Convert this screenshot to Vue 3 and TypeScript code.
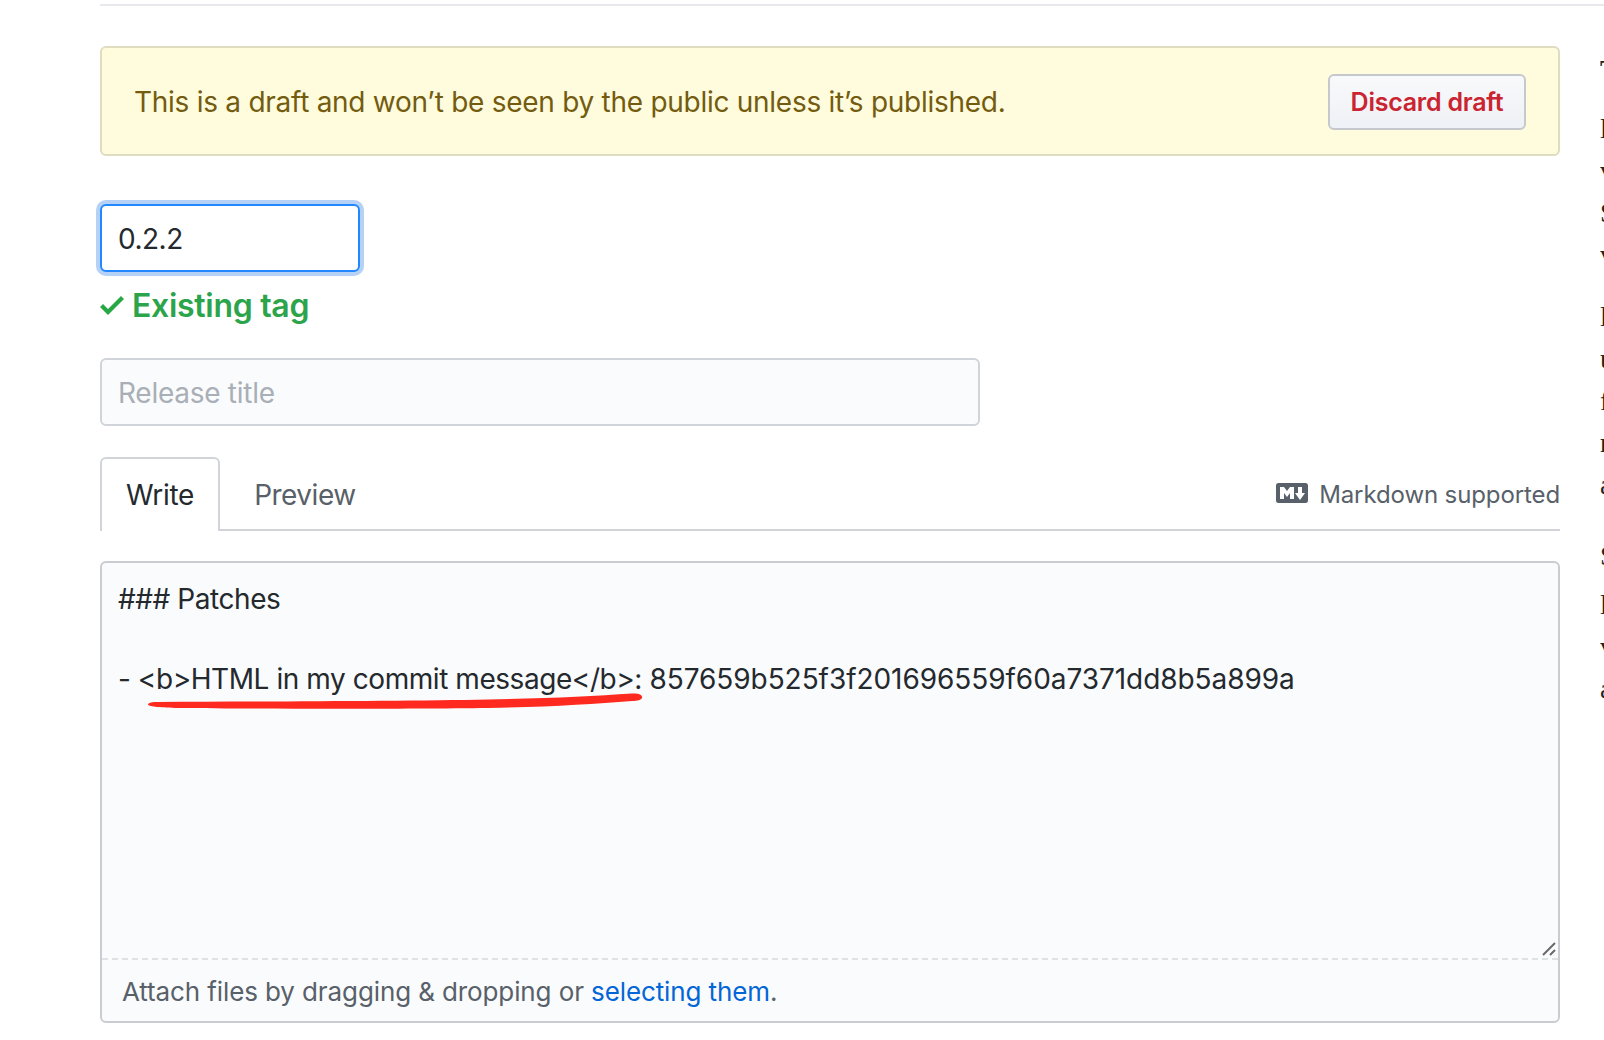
<script setup lang="ts">
const edge = [
  { ch: 'T', base: 79, bold: true }, { ch: 'l', base: 138 }, { ch: 'v', base: 180 }, { ch: 'S', base: 222 },
  { ch: 'v', base: 264 }, { ch: 'l', base: 326 }, { ch: 'u', base: 368 }, { ch: 'f', base: 410 },
  { ch: 'r', base: 452 }, { ch: 'a', base: 494 }, { ch: 'S', base: 565 }, { ch: 'l', base: 614 },
  { ch: 'v', base: 656 }, { ch: 'a', base: 698 }
]
</script>

<template>
  <div class="page">
    <main class="main">
      <div class="banner">
        <p class="banner-text">This is a draft and won’t be seen by the public unless it’s published.</p>
        <button class="discard">Discard draft</button>
      </div>

      <div class="tag-input">0.2.2</div>
      <div class="tag-status">
        <svg class="check" viewBox="0 0 12 16" width="24" height="32" aria-hidden="true">
          <path fill="#28a745" fill-rule="evenodd" d="M12 5l-8 8-4-4 1.500-1.500L4 10l6.500-6.500L12 5z" />
        </svg>
        <span>Existing tag</span>
      </div>

      <div class="title-input">Release title</div>

      <div class="tabs">
        <div class="tab active">Write</div>
        <div class="tab">Preview</div>
        <div class="md">
          <svg viewBox="0 0 16 10" width="32" height="20" aria-hidden="true">
            <path fill="#586069" fill-rule="evenodd" d="M14.850 0H1.150C.520 0 0 .520 0 1.150v7.700C0 9.480.520 10 1.150 10h13.700c.630 0 1.150-.520 1.150-1.150v-7.700C16 .520 15.480 0 14.850 0zM9 8H7V5L5.500 7 4 5v3H2V2h2l1.500 2L7 2h2v6zm2.990.500L9.500 5H11V2h2v3h1.500l-2.510 3.500z" />
          </svg>
          <span>Markdown supported</span>
        </div>
      </div>

      <div class="editor">
        <div class="editor-body">
          <div class="line">### Patches</div>
          <div class="line">&nbsp;</div>
          <div class="line">- &lt;b&gt;HTML in my commit message&lt;/b&gt;: <span class="hash">857659b525f3f201696559f60a7371dd8b5a899a</span></div>
          <svg class="scribble" viewBox="0 0 500 16" width="500" height="16" aria-hidden="true">
            <path d="M0 11.500 C1 9.500 4 9 10 9 C120 8.500 260 8 340 6.500 C400 5.500 445 3 484 .5 C491 0 495 2 494 5 C493 7 490 8 484 8 C445 11 400 14 340 15 C260 16 120 16 30 15 C14 14.500 1 14 0 11.500 Z" fill="#ff2a1f" />
          </svg>
          <svg class="grip" viewBox="0 0 14 14" width="14" height="14" aria-hidden="true">
            <path d="M1 13 L13 1 M8 13 L13 8" stroke="#6a6a6a" stroke-width="2" fill="none" />
          </svg>
        </div>
        <div class="editor-foot">Attach files by dragging &amp; dropping or <span class="link">selecting them</span>.</div>
      </div>
    </main>
    <div class="edge">
      <span v-for="e in edge" :key="e.base" :class="{ bold: e.bold }" :style="{ top: e.base - 25 + 'px' }">{{ e.ch }}</span>
    </div>
  </div>
</template>

<style>
html, body { margin: 0; background: #fff; overflow: hidden; }
</style>

<style scoped>
.page {
  position: relative;
  width: 1604px;
  height: 1040px;
  overflow: hidden;
  font-family: Inter, "Liberation Sans", sans-serif;
  color: #24292e;
}
.main {
  width: 1460px;
  margin-left: 100px;
  padding-top: 46px;
  position: relative;
}
.main::before {
  content: "";
  position: absolute;
  top: 4px;
  left: 0;
  width: 1504px;
  height: 2px;
  background: #e8e9ec;
}
.banner {
  height: 110px;
  box-sizing: border-box;
  display: flex;
  align-items: center;
  justify-content: space-between;
  padding: 2px 32px 0 32px;
  background: #fffbdd;
  border: 2px solid #dfdcbf;
  border-radius: 6px;
}
.banner-text {
  margin: 0;
  font-size: 28px;
  letter-spacing: -0.27px;
  color: #735c0f;
}
.discard {
  width: 198px;
  height: 56px;
  box-sizing: border-box;
  font: 600 25px Inter, "Liberation Sans", sans-serif;
  letter-spacing: -0.25px;
  color: #cb2431;
  background: linear-gradient(#f8f9fb, #eef1f5);
  border: 2px solid #c5c8cd;
  border-radius: 6px;
  padding: 0;
}
.tag-input {
  width: 260px;
  height: 68px;
  margin-top: 48px;
  box-sizing: border-box;
  display: flex;
  align-items: center;
  padding: 2px 0 0 16px;
  font-size: 28px;
  letter-spacing: -0.5px;
  background: #fff;
  border: 2px solid #2188ff;
  border-radius: 6px;
  box-shadow: 0 0 0 4px #b5d1f5;
}
.tag-status {
  display: flex;
  align-items: center;
  gap: 8px;
  height: 40px;
  margin-top: 13px;
  font-size: 32px;
  font-weight: 600;
  letter-spacing: -0.3px;
  color: #2ca44b;
}
.title-input {
  width: 880px;
  height: 68px;
  margin-top: 33px;
  box-sizing: border-box;
  display: flex;
  align-items: center;
  padding: 2px 0 0 16px;
  font-size: 28px;
  letter-spacing: -0.27px;
  color: #a9afb6;
  background: #fafbfc;
  border: 2px solid #d1d5da;
  border-radius: 6px;
}
.tabs {
  display: flex;
  align-items: stretch;
  height: 74px;
  margin-top: 31px;
  box-sizing: border-box;
  border-bottom: 2px solid #d1d5da;
}
.tab {
  display: flex;
  align-items: center;
  padding: 0 24px;
  font-size: 28px;
  letter-spacing: -0.5px;
  color: #586069;
  margin-right: 8px;
  border: 2px solid transparent;
  border-bottom: 0;
  border-radius: 6px 6px 0 0;
  margin-bottom: -2px;
}
.tab.active {
  color: #24292e;
  background: #fff;
  border-color: #d1d5da;
  letter-spacing: -0.3px;
}
.md {
  margin-left: auto;
  display: flex;
  align-items: center;
  gap: 11px;
  font-size: 24px;
  letter-spacing: -0.11px;
  color: #586069;
}
.md span { padding-top: 2px; }
.editor {
  margin-top: 30px;
  height: 462px;
  box-sizing: border-box;
  background: #fafbfc;
  border: 2px solid #c9ccd1;
  border-radius: 6px;
  display: flex;
  flex-direction: column;
}
.editor-body {
  position: relative;
  flex: 1;
  padding: 16px;
  font-size: 28px;
  letter-spacing: -0.44px;
  line-height: 40px;
  border-bottom: 2px dashed #dfe2e5;
}
.line { white-space: pre; }
.hash { letter-spacing: -0.06px; }
.scribble {
  position: absolute;
  left: 46px;
  top: 130px;
}
.grip {
  position: absolute;
  right: 2px;
  bottom: 2px;
}
.editor-foot {
  height: 61px;
  display: flex;
  align-items: center;
  padding: 1px 0 0 20px;
  box-sizing: border-box;
  font-size: 26px;
  letter-spacing: -0.11px;
  color: #586069;
  white-space: pre;
}
.link { color: #0366d6; }
.edge {
  position: absolute;
  left: 1600px;
  top: 0;
  width: 4px;
  height: 100%;
  overflow: hidden;
  font-family: "Liberation Serif", serif;
  font-size: 28px;
  line-height: 32px;
  color: #2a211c;
}
.edge span {
  position: absolute;
  left: 0;
}
.edge .bold { font-weight: 700; }
</style>
